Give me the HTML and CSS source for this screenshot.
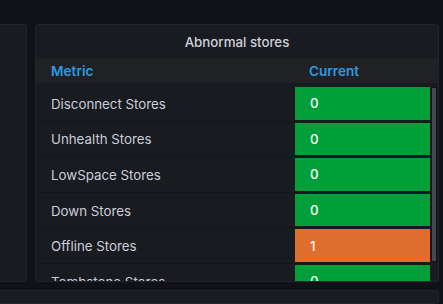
FILE: index.html
```
<!doctype html>
<html>

<head>
    <title>Abnormal stores</title>
    <link rel="stylesheet" href="styles.css">
</head>

<body>
    <div class="Dashboard">
        <div class="PanelRow">
            <div class="Panel PanelLeft"></div>
            <div class="Panel PanelTable">
                <div class="PanelTitle">Abnormal stores</div>
                <div class="TableHead">
                    <div class="ColMetric">Metric</div>
                    <div class="ColCurrent">Current</div>
                </div>
                <div class="TableBody">
                    <div class="Rows">
                        <div class="Row">
                            <div class="ColMetric">Disconnect Stores</div>
                            <div class="ColCurrent"><div class="Cell ok">0</div></div>
                        </div>
                        <div class="Row">
                            <div class="ColMetric">Unhealth Stores</div>
                            <div class="ColCurrent"><div class="Cell ok">0</div></div>
                        </div>
                        <div class="Row">
                            <div class="ColMetric">LowSpace Stores</div>
                            <div class="ColCurrent"><div class="Cell ok">0</div></div>
                        </div>
                        <div class="Row">
                            <div class="ColMetric">Down Stores</div>
                            <div class="ColCurrent"><div class="Cell ok">0</div></div>
                        </div>
                        <div class="Row">
                            <div class="ColMetric">Offline Stores</div>
                            <div class="ColCurrent"><div class="Cell warn">1</div></div>
                        </div>
                        <div class="Row">
                            <div class="ColMetric">Tombstone Stores</div>
                            <div class="ColCurrent"><div class="Cell ok">0</div></div>
                        </div>
                    </div>
                    <div class="Scrollbar"><div class="Thumb"></div></div>
                </div>
            </div>
        </div>
        <div class="Panel PanelBottom"></div>
    </div>
</body>

</html>
```

FILE: styles.css
```
html,
body {
    background-color: #111217;
    margin: 0;
    height: 100%;
    overflow: hidden;
}

body {
    font-family: Inter, "Liberation Sans", sans-serif;
    color: #ccccdc;
    font-size: 13.3px;
}

.Dashboard {
    display: flex;
    flex-direction: column;
    gap: 8px;
    padding-top: 24px;
}

.PanelRow {
    display: flex;
    gap: 8px;
    height: 258px;
    margin-left: -10px;
    margin-right: 4px;
}

.Panel {
    background: #181b1f;
    border: 1px solid #222429;
    border-radius: 3px;
    box-sizing: border-box;
}

.PanelLeft {
    width: 37px;
    flex: none;
}

.PanelTable {
    flex: 1;
    display: flex;
    flex-direction: column;
    overflow: hidden;
}

.PanelTitle {
    height: 34px;
    flex: none;
    display: flex;
    align-items: center;
    justify-content: center;
    font-weight: 500;
    font-size: 13.3px;
    color: #d0d0de;
}

.TableHead {
    height: 24px;
    flex: none;
    display: flex;
    align-items: center;
    background: #1f2125;
    color: #2b9be0;
    font-weight: 600;
    font-size: 13.6px;
    margin-bottom: 3px;
}

.ColMetric {
    width: 258px;
    flex: none;
    box-sizing: border-box;
    padding-left: 15px;
}

.ColCurrent {
    flex: 1;
    box-sizing: border-box;
}

.TableHead .ColCurrent {
    padding-left: 15px;
}

.TableBody {
    flex: 1;
    display: flex;
    overflow: hidden;
}

.Rows {
    flex: 1;
}

.Row {
    height: 35.6px;
    box-sizing: border-box;
    display: flex;
    align-items: center;
    border-bottom: 1px solid #141619;
    padding: 1px 0 0;
}

.Row .ColCurrent {
    align-self: stretch;
    padding: 0 0 1px 1px;
}

.Cell {
    height: 100%;
    display: flex;
    align-items: center;
    padding-left: 15px;
    color: #fff;
    font-weight: 500;
}

.ok {
    background: #019f3a;
}

.warn {
    background: #df6d2e;
}

.Scrollbar {
    width: 8px;
    flex: none;
    padding: 1px 1px 0;
    box-sizing: border-box;
}

.Thumb {
    height: 175px;
    background: #46474f;
    border: 1px solid #111217;
    box-sizing: border-box;
}

.PanelBottom {
    height: 14px;
    margin-right: 4px;
    margin-left: -4px;
}
```
